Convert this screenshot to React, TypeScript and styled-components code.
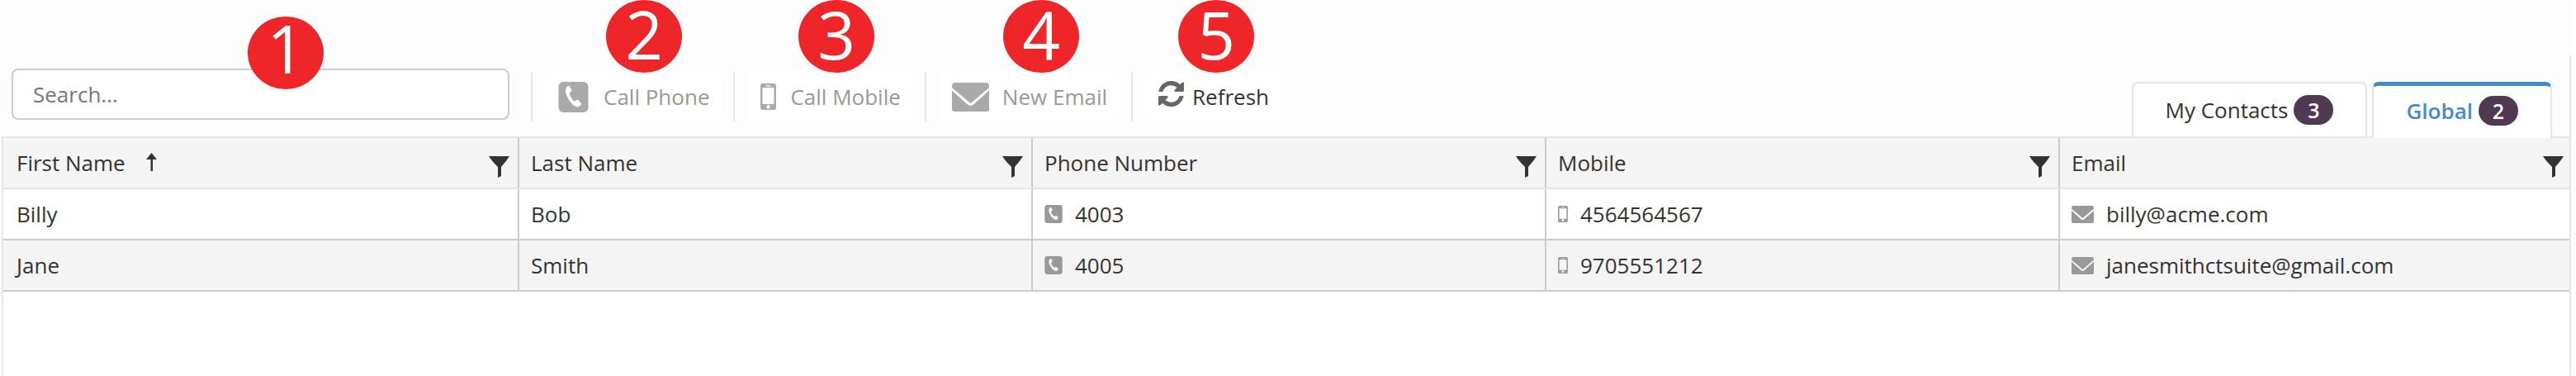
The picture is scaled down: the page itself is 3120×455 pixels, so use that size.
import React from 'react'
import styled, { createGlobalStyle } from 'styled-components'

const GlobalStyle = createGlobalStyle`
  html, body {
    margin: 0;
    padding: 0;
    background: #fff;
    font-family: 'Open Sans', sans-serif;
    color: #333;
  }
`

const PhoneIcon = ({ size }: { size: number }) => (
  <svg width={size} height={size} viewBox='0 0 37 38' fill='none'>
    <rect width='37' height='38' rx='6' fill='currentColor' />
    <path
      d='M11 5.500c1-.8 2.400-.7 3 .4l2 3.600c.5 1 .3 2-.5 2.700l-1.600 1.300c-.4.4-.5.9-.3 1.400 1 2.800 3 6.400 5.500 8.800.4.4.9.4 1.400.1l1.800-1.100c.9-.5 2-.4 2.700.4l2.800 3c.8.9.7 2.200-.3 3l-1.500 1.200c-1.400 1-3.100 1.300-4.600.5-3.500-1.800-6.900-5.300-9.200-9.600C10 17.500 8.500 13.600 8.700 10.800c.1-1.700.7-3.200 2.300-5.300z'
      fill='#fff'
    />
  </svg>
)

const MobileIcon = ({ width, height }: { width: number; height: number }) => (
  <svg width={width} height={height} viewBox='0 0 19 32'>
    <path
      fillRule='evenodd'
      fill='currentColor'
      d='M3 0h13a3 3 0 0 1 3 3v26a3 3 0 0 1-3 3H3a3 3 0 0 1-3-3V3a3 3 0 0 1 3-3zM2.500 5v20h14V5zM9.500 26a2.200 2.200 0 1 0 0 4.400 2.200 2.200 0 0 0 0-4.400zM6.500 2.300v1.200h6V2.300z'
    />
  </svg>
)

const MailIcon = ({ width, height }: { width: number; height: number }) => (
  <svg width={width} height={height} viewBox='0 0 45 35'>
    <path
      fill='currentColor'
      d='M4 0h37a4 4 0 0 1 4 4v2L24.500 23.500a3 3 0 0 1-4 0L0 6V4a4 4 0 0 1 4-4z'
    />
    <path
      fill='currentColor'
      d='M0 9.500l19 17a5 5 0 0 0 7 0l19-17V32a3 3 0 0 1-3 3H3a3 3 0 0 1-3-3z'
    />
  </svg>
)

const RefreshIcon = () => (
  <svg width='31' height='31' viewBox='128 128 1536 1536'>
    <path
      fill='currentColor'
      d='M1639 1056q0 5-1 7-64 268-268 434.500t-478 166.500q-146 0-282.500-55t-243.500-157l-129 129q-19 19-45 19t-45-19-19-45v-448q0-26 19-45t45-19h448q26 0 45 19t19 45-19 45l-137 137q71 66 161 102t187 36q134 0 250-65t186-179q11-17 53-117 8-23 30-23h192q13 0 22.500 9.500t9.500 22.500zm25-800v448q0 26-19 45t-45 19h-448q-26 0-45-19t-19-45 19-45l138-138q-148-137-349-137-134 0-250 65t-186 179q-11 17-53 117-8 23-30 23h-199q-13 0-22.500-9.500t-9.500-22.500v-7q65-268 270-434.500t480-166.500q146 0 284 55.500t245 156.500l130-129q19-19 45-19t45 19 19 45z'
    />
  </svg>
)

const FunnelIcon = () => (
  <svg width='25' height='26' viewBox='0 0 25 26'>
    <path
      fill='#333'
      d='M0 0h25C21 6 17.500 10 15 13v11l-4 2V13C8 10 4 6 0 0z'
    />
  </svg>
)

const SortUpIcon = () => (
  <svg width='13' height='22' viewBox='0 0 13 22'>
    <path fill='#333' d='M6.500 0L13 8H8v14H5.500V8H0z' />
  </svg>
)

type Column = { title: string; sorted?: boolean }

const columns: Column[] = [
  { title: 'First Name', sorted: true },
  { title: 'Last Name' },
  { title: 'Phone Number' },
  { title: 'Mobile' },
  { title: 'Email' },
]

const contacts = [
  {
    first: 'Billy',
    last: 'Bob',
    phone: '4003',
    mobile: '4564564567',
    email: 'billy@acme.com',
  },
  {
    first: 'Jane',
    last: 'Smith',
    phone: '4005',
    mobile: '9705551212',
    email: 'janesmithctsuite@gmail.com',
  },
]

const markers = [
  { label: '1', x: 300, y: 20, lift: 12 },
  { label: '2', x: 734, y: 0, lift: 6 },
  { label: '3', x: 967, y: 0, lift: 6 },
  { label: '4', x: 1215, y: 0, lift: 6 },
  { label: '5', x: 1427, y: 0, lift: 6 },
]

function App() {
  return (
    <React.Fragment>
      <GlobalStyle />
      <Page>
        {markers.map((marker) => (
          <Marker
            key={marker.label}
            $x={marker.x}
            $y={marker.y}
            $lift={marker.lift}
          >
            {marker.label}
          </Marker>
        ))}
        <Toolbar>
          <SearchInput placeholder='Search...' />
          <Divider />
          <ToolButton $disabled>
            <IconSlot $width={37}>
              <PhoneIcon size={37} />
            </IconSlot>
            Call Phone
          </ToolButton>
          <Divider />
          <ToolButton $disabled>
            <IconSlot $width={19} $gap={17}>
              <MobileIcon width={19} height={32} />
            </IconSlot>
            Call Mobile
          </ToolButton>
          <Divider />
          <ToolButton $disabled>
            <IconSlot $width={45} $gap={16}>
              <MailIcon width={45} height={35} />
            </IconSlot>
            New Email
          </ToolButton>
          <Divider />
          <ToolButton>
            <RefreshSlot>
              <RefreshIcon />
            </RefreshSlot>
            Refresh
          </ToolButton>
          <Tabs>
            <Tab>
              My Contacts
              <Badge>3</Badge>
            </Tab>
            <Tab $active>
              Global
              <Badge>2</Badge>
            </Tab>
          </Tabs>
        </Toolbar>
        <Grid>
          <HeaderRow>
            {columns.map((column) => (
              <HeaderCell key={column.title}>
                <HeaderTitle>
                  {column.title}
                  {column.sorted && (
                    <SortSlot>
                      <SortUpIcon />
                    </SortSlot>
                  )}
                </HeaderTitle>
                <FunnelIcon />
              </HeaderCell>
            ))}
          </HeaderRow>
          {contacts.map((contact, index) => (
            <Row key={contact.email} $striped={index % 2 === 1}>
              <Cell>{contact.first}</Cell>
              <Cell>{contact.last}</Cell>
              <Cell>
                <CellIcon $width={22}>
                  <PhoneIcon size={22} />
                </CellIcon>
                {contact.phone}
              </Cell>
              <Cell>
                <CellIcon $width={12}>
                  <MobileIcon width={12} height={20} />
                </CellIcon>
                {contact.mobile}
              </Cell>
              <Cell>
                <CellIcon $width={27}>
                  <MailIcon width={27} height={21} />
                </CellIcon>
                {contact.email}
              </Cell>
            </Row>
          ))}
        </Grid>
      </Page>
    </React.Fragment>
  )
}

const Page = styled.div`
  position: relative;
  width: 3120px;
  height: 455px;
  overflow: hidden;
  background: #fff;
`

const Marker = styled.div<{ $x: number; $y: number; $lift: number }>`
  position: absolute;
  left: ${(p) => p.$x}px;
  top: ${(p) => p.$y}px;
  z-index: 2;
  display: flex;
  align-items: center;
  justify-content: center;
  box-sizing: border-box;
  width: 92px;
  height: 88px;
  padding-bottom: ${(p) => p.$lift}px;
  border-radius: 50%;
  background: #ee2529;
  color: #fff;
  font-size: 80px;
  line-height: 76px;
`

const Toolbar = styled.div`
  position: relative;
  display: flex;
  align-items: flex-start;
  gap: 14px;
  box-sizing: border-box;
  width: 3114px;
  height: 165px;
  padding: 83px 23px 0 14px;
  background: #fdfdfd;

  &::after {
    content: '';
    position: absolute;
    top: 68px;
    right: 0;
    bottom: 0;
    width: 2px;
    background: #e5e5e5;
  }
`

const SearchInput = styled.input`
  box-sizing: border-box;
  width: 603px;
  height: 62px;
  margin-right: 12px;
  padding: 0 24px;
  border: 2px solid #ccc;
  border-radius: 8px;
  background: #fff;
  color: #333;
  font-family: 'Open Sans', sans-serif;
  font-size: 26px;
  outline: none;

  &::placeholder {
    color: #777;
    opacity: 1;
  }
`

const Divider = styled.div`
  flex: none;
  width: 2px;
  height: 60px;
  margin-top: 4px;
  background: #e5e5e5;
`

const ToolButton = styled.div<{ $disabled?: boolean }>`
  display: flex;
  align-items: center;
  height: 60px;
  margin-top: 4px;
  padding: 0 15px 0 17px;
  border-radius: 8px;
  background: #fff;
  color: ${(p) => (p.$disabled ? '#999' : '#333')};
  font-size: 26px;
  white-space: nowrap;
`

const IconSlot = styled.span<{ $width: number; $gap?: number }>`
  display: flex;
  flex: none;
  width: ${(p) => p.$width}px;
  margin-right: ${(p) => p.$gap ?? 18}px;
  color: #aaa;
`

const RefreshSlot = styled.span`
  display: flex;
  flex: none;
  margin: -8px 10px 0 0;
  color: #666;
`

const Tabs = styled.div`
  position: relative;
  z-index: 1;
  display: flex;
  align-self: flex-end;
  gap: 6px;
  margin-left: auto;
  margin-right: 0;
`

const Tab = styled.div<{ $active?: boolean }>`
  display: flex;
  align-items: center;
  box-sizing: border-box;
  height: ${(p) => (p.$active ? 68 : 66)}px;
  margin-bottom: ${(p) => (p.$active ? -2 : 0)}px;
  padding: ${(p) => (p.$active ? '1px 39px 5px' : '4px 39px 4px')};
  border: 2px solid #e5e5e5;
  border-top: ${(p) => (p.$active ? '5px solid #428bca' : '2px solid #e5e5e5')};
  border-bottom: none;
  border-radius: 8px 8px 0 0;
  background: #fff;
  color: ${(p) => (p.$active ? '#428bca' : '#333')};
  font-size: 26px;
  font-weight: ${(p) => (p.$active ? 600 : 400)};
  white-space: nowrap;
`

const Badge = styled.span`
  display: flex;
  align-items: center;
  justify-content: center;
  width: 48px;
  height: 36px;
  margin-left: 7px;
  border-radius: 18px;
  background: #4f3a52;
  color: #fff;
  font-size: 25px;
  font-weight: 600;
`

const Grid = styled.div`
  box-sizing: border-box;
  width: 3112px;
  height: 289px;
  margin-left: 2px;
  border-right: 2px solid #e5e5e5;
  border-left: 2px solid #e5e5e5;
`

const HeaderRow = styled.div`
  display: grid;
  grid-template-columns: 625px 622px 622px 622px 1fr;
  box-sizing: border-box;
  height: 64px;
  border-top: 2px solid #e5e5e5;
  border-bottom: 2px solid #e5e5e5;
  background: #f4f4f4;
`

const HeaderCell = styled.div`
  display: flex;
  align-items: center;
  justify-content: space-between;
  box-sizing: border-box;
  padding: 0 10px 0 14px;
  border-right: 2px solid #ccc;

  &:first-child {
    padding-left: 16px;
  }

  &:last-child {
    padding-right: 7px;
    border-right: none;
  }

  > svg {
    margin-top: 10px;
  }
`

const HeaderTitle = styled.div`
  display: flex;
  align-items: center;
  font-size: 26px;
`

const SortSlot = styled.span`
  display: flex;
  margin: -2px 0 0 25px;
`

const Row = styled.div<{ $striped?: boolean }>`
  display: grid;
  grid-template-columns: 625px 622px 622px 622px 1fr;
  box-sizing: border-box;
  height: 62px;
  border-bottom: 2px solid #ccc;
  background: ${(p) => (p.$striped ? '#f4f4f4' : '#fff')};
`

const Cell = styled.div`
  display: flex;
  align-items: center;
  box-sizing: border-box;
  padding: 0 14px;
  border-right: 2px solid #ccc;
  font-size: 26px;

  &:first-child {
    padding-left: 16px;
  }

  &:last-child {
    border-right: none;
  }
`

const CellIcon = styled.span<{ $width: number }>`
  display: flex;
  flex: none;
  width: ${(p) => p.$width}px;
  margin-right: 15px;
  color: #999;
`

export default App
